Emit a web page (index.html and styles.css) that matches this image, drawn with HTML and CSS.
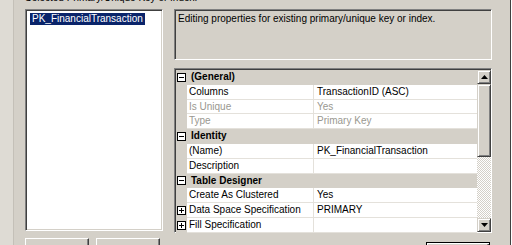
FILE: index.html
```html
<!DOCTYPE html>
<html lang="en">
<head>
    <meta charset="UTF-8">
    <title>Indexes/Keys</title>
    <link rel="stylesheet" href="styles.css">
</head>
<body>
    <div class="dialog">
        <div class="side"></div>
        <div class="panel">
            <div class="caption">Selected Primary/Unique Key or Index:</div>
            <div class="columns">
                <div class="left-col">
                    <div class="listbox">
                        <div class="list-item selected">PK_FinancialTransaction</div>
                    </div>
                    <div class="button-row">
                        <button class="btn">Add</button>
                        <button class="btn">Delete</button>
                    </div>
                </div>
                <div class="right-col">
                    <div class="description">Editing properties for existing primary/unique key or index.</div>
                    <div class="prop-grid">
                        <div class="rows">
                            <div class="cat-row">
                                <span class="gutter"><svg class="toggle" width="9" height="9" viewBox="0 0 9 9"><rect x="0.5" y="0.5" width="8" height="8" fill="#fff" stroke="#000"/><path d="M2 4.5h5" stroke="#000"/></svg></span>
                                <span class="cat-name">(General)</span>
                            </div>
                            <div class="prop-row">
                                <span class="gutter"></span>
                                <span class="name">Columns</span>
                                <span class="value">TransactionID (ASC)</span>
                            </div>
                            <div class="prop-row readonly">
                                <span class="gutter"></span>
                                <span class="name">Is Unique</span>
                                <span class="value">Yes</span>
                            </div>
                            <div class="prop-row readonly">
                                <span class="gutter"></span>
                                <span class="name">Type</span>
                                <span class="value">Primary Key</span>
                            </div>
                            <div class="cat-row">
                                <span class="gutter"><svg class="toggle" width="9" height="9" viewBox="0 0 9 9"><rect x="0.5" y="0.5" width="8" height="8" fill="#fff" stroke="#000"/><path d="M2 4.5h5" stroke="#000"/></svg></span>
                                <span class="cat-name">Identity</span>
                            </div>
                            <div class="prop-row">
                                <span class="gutter"></span>
                                <span class="name">(Name)</span>
                                <span class="value">PK_FinancialTransaction</span>
                            </div>
                            <div class="prop-row">
                                <span class="gutter"></span>
                                <span class="name">Description</span>
                                <span class="value"></span>
                            </div>
                            <div class="cat-row">
                                <span class="gutter"><svg class="toggle" width="9" height="9" viewBox="0 0 9 9"><rect x="0.5" y="0.5" width="8" height="8" fill="#fff" stroke="#000"/><path d="M2 4.5h5" stroke="#000"/></svg></span>
                                <span class="cat-name">Table Designer</span>
                            </div>
                            <div class="prop-row">
                                <span class="gutter"></span>
                                <span class="name">Create As Clustered</span>
                                <span class="value">Yes</span>
                            </div>
                            <div class="prop-row">
                                <span class="gutter"><svg class="toggle" width="9" height="9" viewBox="0 0 9 9"><rect x="0.5" y="0.5" width="8" height="8" fill="#fff" stroke="#000"/><path d="M2 4.5h5M4.5 2v5" stroke="#000"/></svg></span>
                                <span class="name">Data Space Specification</span>
                                <span class="value">PRIMARY</span>
                            </div>
                            <div class="prop-row">
                                <span class="gutter"><svg class="toggle" width="9" height="9" viewBox="0 0 9 9"><rect x="0.5" y="0.5" width="8" height="8" fill="#fff" stroke="#000"/><path d="M2 4.5h5M4.5 2v5" stroke="#000"/></svg></span>
                                <span class="name">Fill Specification</span>
                                <span class="value"></span>
                            </div>
                        </div>
                        <div class="scrollbar">
                            <div class="sb-btn"><svg width="7" height="4" viewBox="0 0 7 4"><path d="M3.5 0L7 4H0z" fill="#000"/></svg></div>
                            <div class="sb-thumb"></div>
                            <div class="sb-track"></div>
                            <div class="sb-btn"><svg width="7" height="4" viewBox="0 0 7 4"><path d="M0 0h7L3.5 4z" fill="#000"/></svg></div>
                        </div>
                    </div>
                    <div class="footer">
                        <button class="btn default">Close</button>
                    </div>
                </div>
            </div>
        </div>
        <div class="outside"></div>
    </div>
</body>
</html>
```

FILE: styles.css
```css
:root {
    --face: #d4d0c8;
    --shadow: #808080;
    --dark: #404040;
    --select: #0a246a;
    --line: #e4e1db;
    --disabled: #9a9890;
}

body {
    margin: 0;
    width: 512px;
    height: 245px;
    overflow: hidden;
    background: var(--face);
    font-family: 'Liberation Sans', Arial, sans-serif;
    font-size: 10px;
    color: #000;
}

.dialog {
    display: flex;
    height: 245px;
}

.side {
    width: 13px;
    background: #dedbd4;
    border-right: 1px solid #c4c0b8;
}

.panel {
    width: 476px;
    padding: 0 9px 0 11px;
    border-right: 1px solid var(--dark);
}

.outside {
    flex: 1;
    border-left: 1px solid #fff;
}

.caption {
    height: 9px;
    line-height: 11px;
    margin-top: -8px;
    padding-top: 0;
    overflow: visible;
    margin-bottom: 8px;
}

.columns {
    display: flex;
    gap: 11px;
}

/* left side: key list + buttons */
.left-col {
    width: 138px;
}

.listbox {
    height: 220px;
    background: #fff;
    border: 1px solid;
    border-color: var(--shadow) #fff #fff var(--shadow);
    box-shadow: inset 1px 1px 0 var(--dark), inset -1px -1px 0 var(--face);
    padding: 3px 4px;
    box-sizing: border-box;
    height: 222px;
}

.list-item {
    display: inline-block;
    padding: 0 2px;
    line-height: 12px;
}

.list-item.selected {
    background: var(--select);
    color: #fff;
}

.button-row {
    display: flex;
    gap: 7px;
    margin-top: 7px;
}

.btn {
    font-family: inherit;
    font-size: 10px;
    width: 64px;
    height: 23px;
    padding: 0;
    background: var(--face);
    border: 1px solid;
    border-color: #fff var(--dark) var(--dark) #fff;
    box-shadow: inset -1px -1px 0 var(--shadow);
    color: #000;
}

/* right side: description + property grid */
.right-col {
    width: 318px;
}

.description {
    height: 51px;
    box-sizing: border-box;
    border: 1px solid;
    border-color: var(--shadow) #fff #fff var(--shadow);
    box-shadow: inset 1px 1px 0 var(--dark);
    padding: 3px 3px;
    line-height: 12px;
}

.prop-grid {
    display: flex;
    margin-top: 8px;
    height: 165px;
    box-sizing: border-box;
    border: 1px solid;
    border-color: var(--shadow) #fff #fff var(--shadow);
    box-shadow: inset 1px 1px 0 var(--dark);
    padding: 1px 0 0 1px;
}

.rows {
    flex: 1;
}

.cat-row,
.prop-row {
    display: flex;
    height: 14.8px;
    line-height: 14px;
}

.cat-row {
    background: var(--face);
}

.cat-name {
    font-weight: bold;
    padding-left: 4px;
}

.gutter {
    width: 11px;
    flex-shrink: 0;
    background: var(--face);
    display: flex;
    align-items: center;
    justify-content: center;
}

.toggle {
    display: block;
}

.name,
.value {
    box-sizing: border-box;
    background: #fff;
    border-bottom: 1px solid var(--line);
    padding-left: 2px;
    white-space: nowrap;
    overflow: hidden;
}

.name {
    width: 127px;
    border-right: 1px solid var(--line);
}

.value {
    flex: 1;
    padding-left: 3px;
}

.readonly .name,
.readonly .value {
    color: var(--disabled);
}

.scrollbar {
    width: 14px;
    display: flex;
    flex-direction: column;
}

.sb-btn,
.sb-thumb {
    box-sizing: border-box;
    background: var(--face);
    border: 1px solid;
    border-color: var(--face) var(--dark) var(--dark) var(--face);
    box-shadow: inset 1px 1px 0 #fff, inset -1px -1px 0 var(--shadow);
}

.sb-btn {
    height: 14px;
    display: flex;
    align-items: center;
    justify-content: center;
}

.sb-btn svg {
    display: block;
}

.sb-thumb {
    height: 73px;
}

.sb-track {
    flex: 1;
    background: repeating-conic-gradient(#fff 0 25%, var(--face) 0 50%) 0 0 / 2px 2px;
}

.footer {
    display: flex;
    justify-content: flex-end;
    padding-right: 2px;
    margin-top: 9px;
}

.btn.default {
    border-color: #000;
    box-shadow: inset 1px 1px 0 #fff, inset -1px -1px 0 var(--dark), inset -2px -2px 0 var(--shadow);
}
```
